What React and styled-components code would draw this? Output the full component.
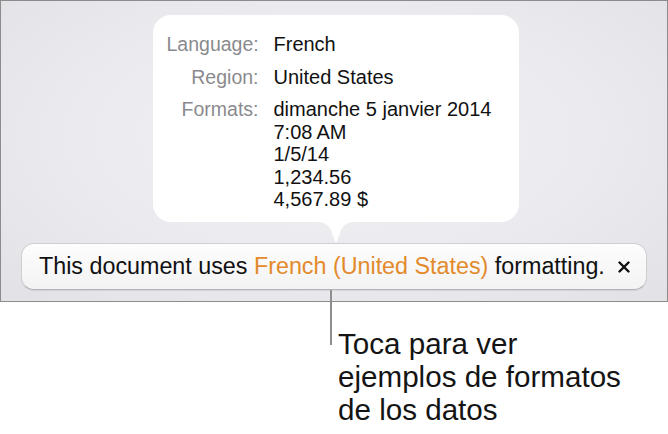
import React from "react";
import styled, { createGlobalStyle } from "styled-components";

const GlobalStyle = createGlobalStyle`
  html, body {
    margin: 0;
    padding: 0;
    background: #ffffff;
  }
  body {
    font-family: "Liberation Sans", Arial, sans-serif;
    -webkit-font-smoothing: antialiased;
  }
`;

const Page = styled.div`
  width: 668px;
  height: 434px;
  overflow: hidden;
  background: #ffffff;
`;

const Screen = styled.div`
  box-sizing: border-box;
  width: 668px;
  height: 302px;
  border: 1px solid #8c8c8c;
  background: radial-gradient(
    ellipse at 50% 45%,
    #f1f1f4 0%,
    #ebebef 55%,
    #e2e2e6 100%
  );
  display: flex;
  flex-direction: column;
  align-items: center;
  padding: 14px 20px 11px;
`;

const PopoverWrap = styled.div`
  display: flex;
  flex-direction: column;
  align-items: center;
  margin-left: 3px;
`;

const Bubble = styled.div`
  box-sizing: border-box;
  width: 366px;
  height: 207px;
  background: #ffffff;
  border-radius: 18px;
  padding: 18px 20px 11px 14px;
  display: grid;
  grid-template-columns: 92px auto;
  column-gap: 15px;
  row-gap: 10px;
  align-content: start;
`;

const Label = styled.div`
  text-align: right;
  font-size: 19.5px;
  line-height: 22.5px;
  color: #8a8a8e;
  white-space: nowrap;
`;

const Value = styled.div`
  font-size: 20px;
  line-height: 22.5px;
  color: #111111;
  white-space: nowrap;
`;

const Arrow = styled.svg`
  display: block;
  width: 38px;
  height: 21px;
  margin-top: -0.5px;
`;

const Banner = styled.div`
  box-sizing: border-box;
  align-self: stretch;
  height: 47px;
  border-radius: 13px;
  background: linear-gradient(#fdfdfd, #f3f3f4);
  border: 1px solid #d0d0d3;
  border-bottom-color: #b4b4b8;
  box-shadow: 0 1px 1px rgba(0, 0, 0, 0.08);
  display: flex;
  align-items: center;
  padding: 0 16px 0 17px;
  font-size: 23.3px;
  color: #111111;
  white-space: nowrap;
`;

const Message = styled.span`
  flex: 1;
`;

const Accent = styled.span`
  color: #e38a2b;
`;

const Close = styled.svg`
  width: 12px;
  height: 12px;
  flex-shrink: 0;
  margin-top: 1px;
`;

const Callout = styled.div`
  display: flex;
  align-items: flex-start;
  padding-left: 330px;
`;

const Leader = styled.div`
  width: 2px;
  height: 55px;
  margin-top: -12px;
  background: #8e8e8e;
  position: relative;
`;

const Note = styled.div`
  margin: 25px 0 0 6px;
  font-size: 29.6px;
  line-height: 33px;
  color: #141414;
`;

const rows = [
  { label: "Language:", values: ["French"] },
  { label: "Region:", values: ["United States"] },
  {
    label: "Formats:",
    values: ["dimanche 5 janvier 2014", "7:08\u2009AM", "1/5/14", "1,234.56", "4,567.89 $"],
  },
];

export default function App() {
  return (
    <Page>
      <GlobalStyle />
      <Screen>
        <PopoverWrap>
          <Bubble>
            {rows.map((row) => (
              <React.Fragment key={row.label}>
                <Label>{row.label}</Label>
                <Value>
                  {row.values.map((v) => (
                    <div key={v}>{v}</div>
                  ))}
                </Value>
              </React.Fragment>
            ))}
          </Bubble>
          <Arrow viewBox="0 0 38 21">
            <path
              d="M0 0 C8 0 11 3 14 8 L18 19.6 Q19 21.2 20 19.6 L24 8 C27 3 30 0 38 0 Z"
              fill="#ffffff"
            />
          </Arrow>
        </PopoverWrap>
        <Banner>
          <Message>
            This document uses <Accent>French (United States)</Accent> formatting.
          </Message>
          <Close viewBox="0 0 12 12">
            <path
              d="M1.5 1.5 L10.5 10.5 M10.5 1.5 L1.5 10.5"
              stroke="#111111"
              strokeWidth="2.4"
              strokeLinecap="round"
            />
          </Close>
        </Banner>
      </Screen>
      <Callout>
        <Leader />
        <Note>
          Toca para ver
          <br />
          ejemplos de formatos
          <br />
          de los datos
        </Note>
      </Callout>
    </Page>
  );
}
